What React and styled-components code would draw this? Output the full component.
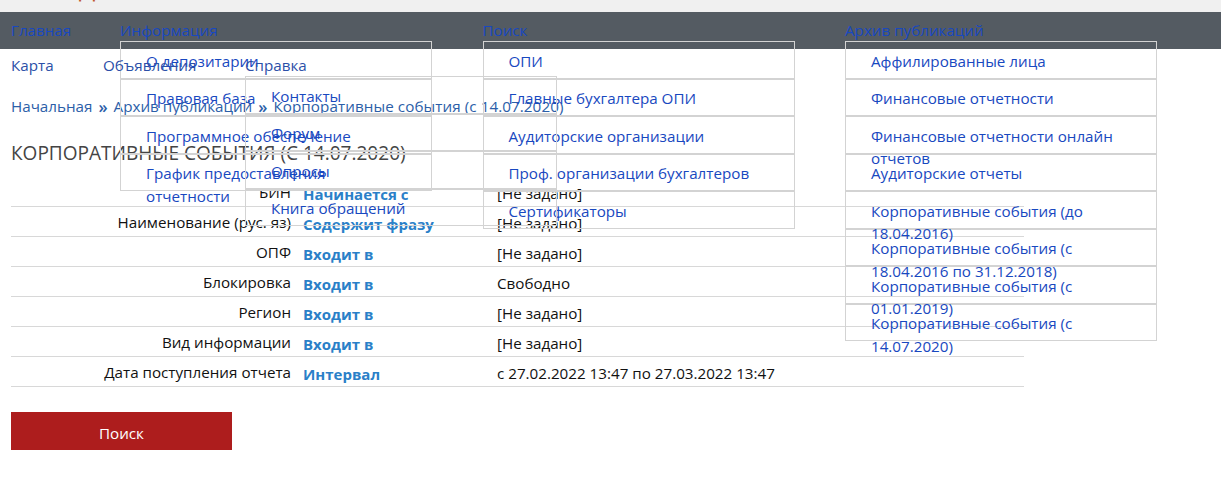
import React from "react";
import styled, { createGlobalStyle } from "styled-components";

const GlobalStyle = createGlobalStyle`
  html, body {
    margin: 0;
    padding: 0;
    background: #fff;
    font-family: "Open Sans", "Noto Sans", sans-serif;
    font-size: 15.2px;
    line-height: 23px;
  }
  * { box-sizing: border-box; }
`;

const TopStrip = styled.div`
  height: 12px;
  background: #f0f0f0;
  overflow: hidden;
  padding-left: 79px;
`;

const LogoText = styled.div`
  margin-top: -25px;
  font-size: 24px;
  line-height: 26px;
  color: #c0562e;
`;

const MainNav = styled.nav`
  display: flex;
  gap: 50px;
  height: 37px;
  padding: 7px 11px 0;
  background: #545b62;
`;

const SubNav = styled.nav`
  display: flex;
  gap: 50px;
  height: 37px;
  padding: 5px 11px 0;
`;

const NavItem = styled.div`
  position: relative;
  width: ${(p) => p.$width};
  height: 23px;
`;

const NavLink = styled.a`
  color: ${(p) => p.$color || "#1848c0"};
  white-space: nowrap;
`;

const Dropdown = styled.ul`
  position: absolute;
  top: 22px;
  left: 0;
  width: 312px;
  margin: 0;
  padding: 0;
  list-style: none;
`;

const DropdownItem = styled.li`
  height: 37.5px;
  padding: 7.5px 40px 0 25px;
  border: 1px solid #d3d3d3;
  line-height: 22.5px;
  color: #1848c0;
`;

const Breadcrumbs = styled.div`
  display: flex;
  gap: 6px;
  height: 30px;
  padding: 9px 11px 0;
  color: #2b5ea8;
  white-space: nowrap;
`;

const Separator = styled.span`
  font-size: 16.5px;
  font-weight: 600;
`;

const CurrentCrumb = styled.span`
  letter-spacing: 0.08px;
`;

const Title = styled.h1`
  height: 49px;
  margin: 0;
  padding: 25px 11px 0;
  font-size: 19.05px;
  font-weight: 400;
  line-height: 24px;
  color: #444;
  white-space: nowrap;
`;

const FilterTable = styled.div`
  width: 1013px;
  margin: 12px 0 0 11px;
`;

const FilterRow = styled.div`
  display: grid;
  grid-template-columns: 280px 182px 1fr;
  column-gap: 12px;
  height: 30px;
  padding-top: 5px;
  border-bottom: 1px solid #d8d8d8;
  color: #111;
`;

const Label = styled.div`
  margin-top: -1px;
  text-align: right;
`;

const Operator = styled.a`
  margin-top: 1px;
  font-size: 15px;
  font-weight: 700;
  color: #2a80c8;
`;

const SearchButton = styled.button`
  display: block;
  width: 221px;
  height: 38px;
  margin: 25px 0 0 11px;
  padding: 4px 0 0;
  border: 0;
  background: #ad1d1d;
  color: #fff;
  font: inherit;
`;

const infoMenu = [
  "О депозитарии",
  "Правовая база",
  "Программное обеспечение",
  "График предоставления отчетности",
];
const searchMenu = [
  "ОПИ",
  "Главные бухгалтера ОПИ",
  "Аудиторские организации",
  "Проф. организации бухгалтеров",
  "Сертификаторы",
];
const archiveMenu = [
  "Аффилированные лица",
  "Финансовые отчетности",
  "Финансовые отчетности онлайн отчетов",
  "Аудиторские отчеты",
  "Корпоративные события (до 18.04.2016)",
  "Корпоративные события (с 18.04.2016 по 31.12.2018)",
  "Корпоративные события (с 01.01.2019)",
  "Корпоративные события (с 14.07.2020)",
];
const helpMenu = ["Контакты", "Форум", "Опросы", "Книга обращений"];

const filters = [
  { label: "БИН", op: "Начинается с", value: "[Не задано]" },
  { label: "Наименование (рус. яз)", op: "Содержит фразу", value: "[Не задано]" },
  { label: "ОПФ", op: "Входит в", value: "[Не задано]" },
  { label: "Блокировка", op: "Входит в", value: "Свободно" },
  { label: "Регион", op: "Входит в", value: "[Не задано]" },
  { label: "Вид информации", op: "Входит в", value: "[Не задано]" },
  {
    label: "Дата поступления отчета",
    op: "Интервал",
    value: "с 27.02.2022 13:47 по 27.03.2022 13:47",
  },
];

const Menu = ({ items }) => (
  <Dropdown>
    {items.map((item) => (
      <DropdownItem key={item}>{item}</DropdownItem>
    ))}
  </Dropdown>
);

const App = () => {
  return (
    <>
      <GlobalStyle />
      <TopStrip>
        <LogoText>Д</LogoText>
      </TopStrip>

      <MainNav>
        <NavItem $width="59px">
          <NavLink>Главная</NavLink>
        </NavItem>
        <NavItem $width="312.5px">
          <NavLink>Информация</NavLink>
          <Menu items={infoMenu} />
        </NavItem>
        <NavItem $width="312.5px">
          <NavLink>Поиск</NavLink>
          <Menu items={searchMenu} />
        </NavItem>
        <NavItem $width="312.5px">
          <NavLink>Архив публикаций</NavLink>
          <Menu items={archiveMenu} />
        </NavItem>
      </MainNav>

      <SubNav>
        <NavItem $width="42px">
          <NavLink $color="#2b4fa8">Карта</NavLink>
        </NavItem>
        <NavItem $width="92px">
          <NavLink $color="#2b4fa8">Объявления</NavLink>
        </NavItem>
        <NavItem $width="312.5px">
          <NavLink $color="#2b4fa8">Справка</NavLink>
          <Menu items={helpMenu} />
        </NavItem>
      </SubNav>

      <Breadcrumbs>
        <span>Начальная</span>
        <Separator>»</Separator>
        <span>Архив публикаций</span>
        <Separator>»</Separator>
        <CurrentCrumb>Корпоративные события (с 14.07.2020)</CurrentCrumb>
      </Breadcrumbs>

      <Title>КОРПОРАТИВНЫЕ СОБЫТИЯ (С 14.07.2020)</Title>

      <FilterTable>
        {filters.map((f) => (
          <FilterRow key={f.label}>
            <Label>{f.label}</Label>
            <Operator>{f.op}</Operator>
            <div>{f.value}</div>
          </FilterRow>
        ))}
      </FilterTable>

      <SearchButton>Поиск</SearchButton>
    </>
  );
};

export default App;
